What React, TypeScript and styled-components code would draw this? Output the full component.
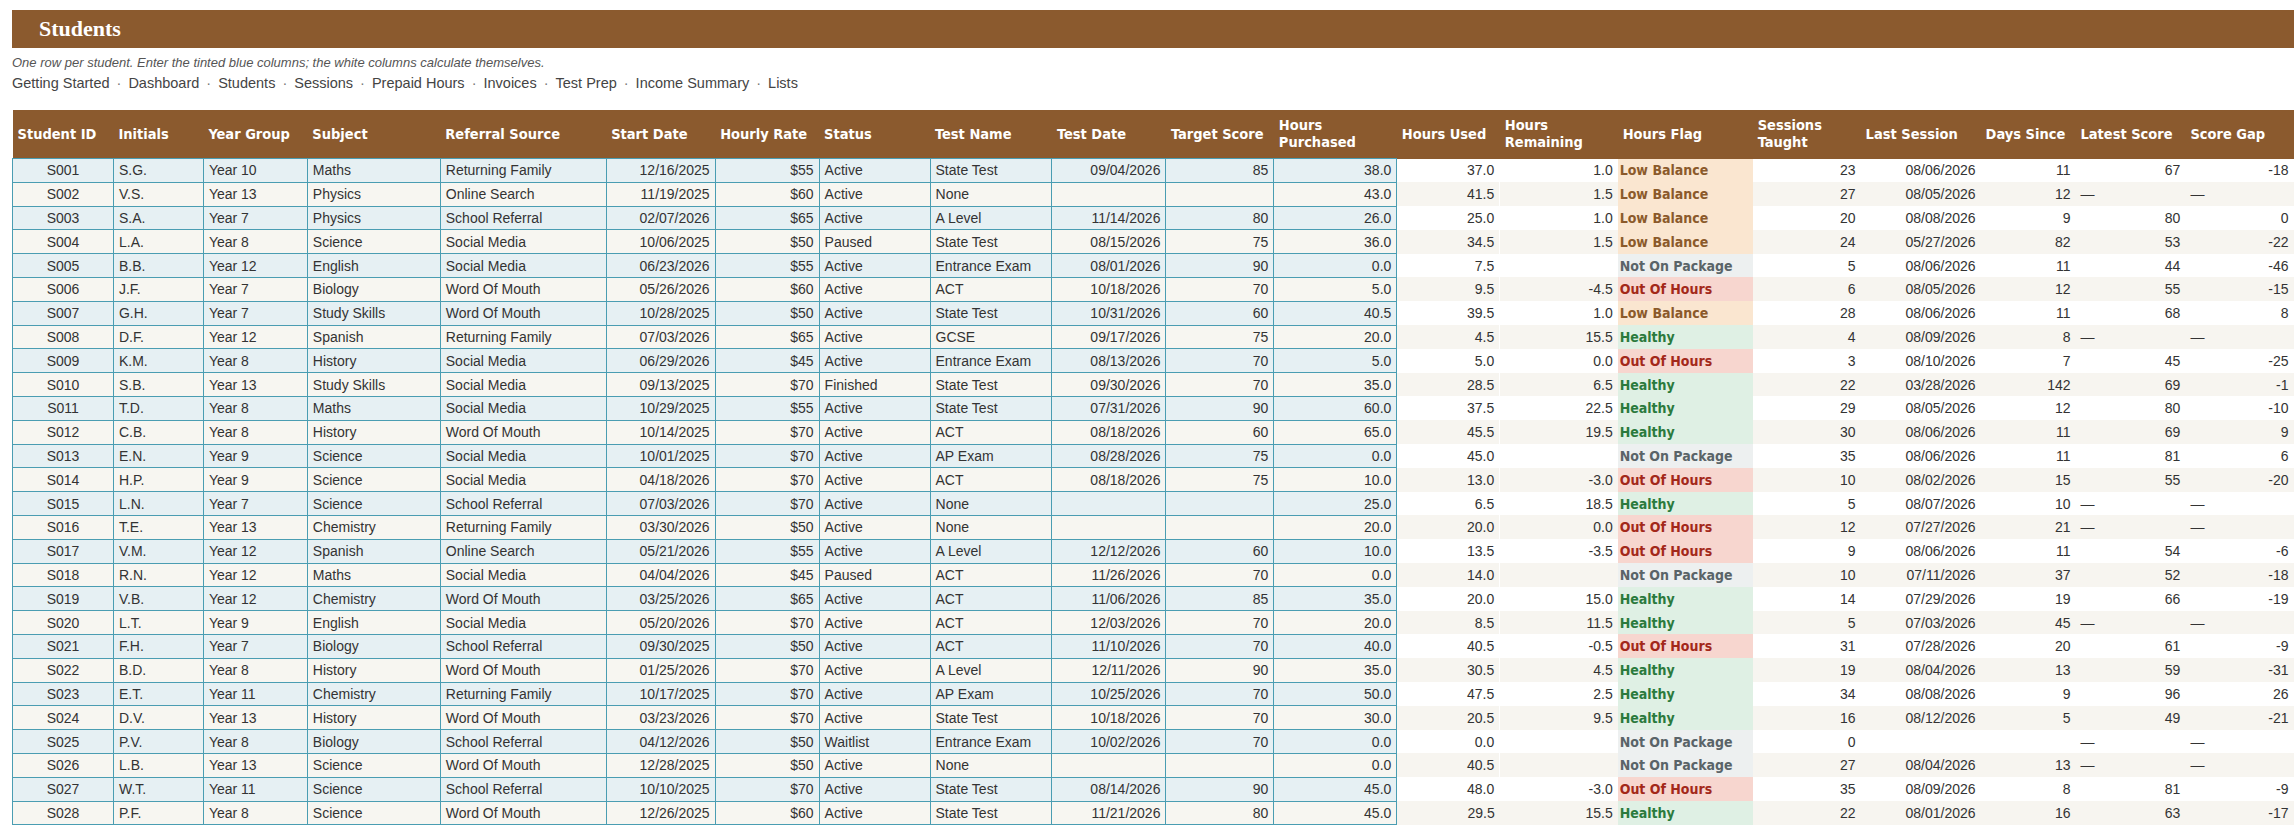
import * as React from 'react'
import styled, {createGlobalStyle} from 'styled-components'

const Global = createGlobalStyle`
  body { margin: 0; background: #fff; font-family: "Liberation Sans", Arial, sans-serif; }
`

type Flag = 'low' | 'none' | 'out' | 'ok' | ''

const widths = [101, 90, 104, 133, 166, 109, 104, 111, 122, 114, 108, 123, 103, 118, 135, 108, 120, 95, 110, 108]

const headers = [
  'Student ID', 'Initials', 'Year Group', 'Subject', 'Referral Source', 'Start Date', 'Hourly Rate', 'Status',
  'Test Name', 'Test Date', 'Target Score', 'Hours Purchased', 'Hours Used', 'Hours Remaining', 'Hours Flag',
  'Sessions Taught', 'Last Session', 'Days Since', 'Latest Score', 'Score Gap',
]

const navItems = [
  'Getting Started', 'Dashboard', 'Students', 'Sessions', 'Prepaid Hours', 'Invoices', 'Test Prep',
  'Income Summary', 'Lists',
]

const raw = `S001|S.G.|Year 10|Maths|Returning Family|12/16/2025|$55|Active|State Test|09/04/2026|85|38.0|37.0|1.0|low|23|08/06/2026|11|67|-18
S002|V.S.|Year 13|Physics|Online Search|11/19/2025|$60|Active|None|||43.0|41.5|1.5|low|27|08/05/2026|12|—|—
S003|S.A.|Year 7|Physics|School Referral|02/07/2026|$65|Active|A Level|11/14/2026|80|26.0|25.0|1.0|low|20|08/08/2026|9|80|0
S004|L.A.|Year 8|Science|Social Media|10/06/2025|$50|Paused|State Test|08/15/2026|75|36.0|34.5|1.5|low|24|05/27/2026|82|53|-22
S005|B.B.|Year 12|English|Social Media|06/23/2026|$55|Active|Entrance Exam|08/01/2026|90|0.0|7.5||none|5|08/06/2026|11|44|-46
S006|J.F.|Year 7|Biology|Word Of Mouth|05/26/2026|$60|Active|ACT|10/18/2026|70|5.0|9.5|-4.5|out|6|08/05/2026|12|55|-15
S007|G.H.|Year 7|Study Skills|Word Of Mouth|10/28/2025|$50|Active|State Test|10/31/2026|60|40.5|39.5|1.0|low|28|08/06/2026|11|68|8
S008|D.F.|Year 12|Spanish|Returning Family|07/03/2026|$65|Active|GCSE|09/17/2026|75|20.0|4.5|15.5|ok|4|08/09/2026|8|—|—
S009|K.M.|Year 8|History|Social Media|06/29/2026|$45|Active|Entrance Exam|08/13/2026|70|5.0|5.0|0.0|out|3|08/10/2026|7|45|-25
S010|S.B.|Year 13|Study Skills|Social Media|09/13/2025|$70|Finished|State Test|09/30/2026|70|35.0|28.5|6.5|ok|22|03/28/2026|142|69|-1
S011|T.D.|Year 8|Maths|Social Media|10/29/2025|$55|Active|State Test|07/31/2026|90|60.0|37.5|22.5|ok|29|08/05/2026|12|80|-10
S012|C.B.|Year 8|History|Word Of Mouth|10/14/2025|$70|Active|ACT|08/18/2026|60|65.0|45.5|19.5|ok|30|08/06/2026|11|69|9
S013|E.N.|Year 9|Science|Social Media|10/01/2025|$70|Active|AP Exam|08/28/2026|75|0.0|45.0||none|35|08/06/2026|11|81|6
S014|H.P.|Year 9|Science|Social Media|04/18/2026|$70|Active|ACT|08/18/2026|75|10.0|13.0|-3.0|out|10|08/02/2026|15|55|-20
S015|L.N.|Year 7|Science|School Referral|07/03/2026|$70|Active|None|||25.0|6.5|18.5|ok|5|08/07/2026|10|—|—
S016|T.E.|Year 13|Chemistry|Returning Family|03/30/2026|$50|Active|None|||20.0|20.0|0.0|out|12|07/27/2026|21|—|—
S017|V.M.|Year 12|Spanish|Online Search|05/21/2026|$55|Active|A Level|12/12/2026|60|10.0|13.5|-3.5|out|9|08/06/2026|11|54|-6
S018|R.N.|Year 12|Maths|Social Media|04/04/2026|$45|Paused|ACT|11/26/2026|70|0.0|14.0||none|10|07/11/2026|37|52|-18
S019|V.B.|Year 12|Chemistry|Word Of Mouth|03/25/2026|$65|Active|ACT|11/06/2026|85|35.0|20.0|15.0|ok|14|07/29/2026|19|66|-19
S020|L.T.|Year 9|English|Social Media|05/20/2026|$70|Active|ACT|12/03/2026|70|20.0|8.5|11.5|ok|5|07/03/2026|45|—|—
S021|F.H.|Year 7|Biology|School Referral|09/30/2025|$50|Active|ACT|11/10/2026|70|40.0|40.5|-0.5|out|31|07/28/2026|20|61|-9
S022|B.D.|Year 8|History|Word Of Mouth|01/25/2026|$70|Active|A Level|12/11/2026|90|35.0|30.5|4.5|ok|19|08/04/2026|13|59|-31
S023|E.T.|Year 11|Chemistry|Returning Family|10/17/2025|$70|Active|AP Exam|10/25/2026|70|50.0|47.5|2.5|ok|34|08/08/2026|9|96|26
S024|D.V.|Year 13|History|Word Of Mouth|03/23/2026|$70|Active|State Test|10/18/2026|70|30.0|20.5|9.5|ok|16|08/12/2026|5|49|-21
S025|P.V.|Year 8|Biology|School Referral|04/12/2026|$50|Waitlist|Entrance Exam|10/02/2026|70|0.0|0.0||none|0|||—|—
S026|L.B.|Year 13|Science|Word Of Mouth|12/28/2025|$50|Active|None|||0.0|40.5||none|27|08/04/2026|13|—|—
S027|W.T.|Year 11|Science|School Referral|10/10/2025|$70|Active|State Test|08/14/2026|90|45.0|48.0|-3.0|out|35|08/09/2026|8|81|-9
S028|P.F.|Year 8|Science|Word Of Mouth|12/26/2025|$60|Active|State Test|11/21/2026|80|45.0|29.5|15.5|ok|22|08/01/2026|16|63|-17`

const rows = raw.split('\n').map(l => l.split('|'))

// alignment per column: l = left, r = right, c = center
const align = ['c', 'l', 'l', 'l', 'l', 'r', 'r', 'l', 'l', 'r', 'r', 'r', 'r', 'r', 'l', 'r', 'r', 'r', 'r', 'r']

const flagText: Record<string, string> = {
  low: 'Low Balance', none: 'Not On Package', out: 'Out Of Hours', ok: 'Healthy',
}
const flagColors: Record<string, [string, string]> = {
  low: ['#fae6d0', '#8b5a2b'],
  none: ['#edf0f0', '#5a6468'],
  out: ['#f7d6cf', '#a3281a'],
  ok: ['#dff0e4', '#2b7a3d'],
}

const Page = styled.div`
  padding: 10px 0 0 12px;
`

const TitleBar = styled.div`
  background: #8b5a2e;
  height: 38px;
  display: flex;
  align-items: center;
  padding-left: 27px;
  color: #fff;
  font-family: "Liberation Serif", "Times New Roman", serif;
  font-weight: bold;
  font-size: 22px;
`

const Note = styled.div`
  margin-top: 7px;
  font-size: 13px;
  font-style: italic;
  color: #555;
`

const Nav = styled.div`
  margin-top: 5px;
  font-size: 14.5px;
  color: #444;
`

const Sep = styled.span`
  margin: 0 7px;
  color: #777;
`

const Table = styled.table`
  margin-top: 19px;
  border-collapse: collapse;
  table-layout: fixed;
  font-size: 14px;
  color: #333;
`

const Th = styled.th`
  background: #8b5a2e;
  color: #fff;
  height: 48px;
  padding: 0 5px;
  text-align: left;
  font-family: "DejaVu Sans Condensed", "DejaVu Sans", sans-serif;
  font-weight: bold;
  font-size: 14.5px;
  line-height: 17px;
`

const Td = styled.td<{$input: boolean; $even: boolean; $align: string; $flag?: string}>`
  height: 22.8px;
  padding: 0 5px;
  white-space: nowrap;
  overflow: hidden;
  text-align: ${p => (p.$align === 'c' ? 'center' : p.$align === 'r' ? 'right' : 'left')};
  border: ${p => (p.$input ? '1px solid #4a9db2' : 'none')};
  background: ${p =>
    p.$flag ? flagColors[p.$flag][0] : p.$input ? (p.$even ? '#f7f6f1' : '#e6f0f3') : p.$even ? '#f7f5f0' : '#fff'};
  ${p =>
    p.$flag
      ? `color: ${flagColors[p.$flag][1]}; font-family: "DejaVu Sans Condensed", "DejaVu Sans", sans-serif; font-weight: bold; font-size: 14px; padding-left: 2px;`
      : ''}
`

const Dash = styled.span`
  float: left;
`

export default function App() {
  return (
    <Page>
      <Global />
      <TitleBar>Students</TitleBar>
      <Note>One row per student. Enter the tinted blue columns; the white columns calculate themselves.</Note>
      <Nav>
        {navItems.map((n, i) => (
          <React.Fragment key={n}>
            {i > 0 && <Sep>·</Sep>}
            {n}
          </React.Fragment>
        ))}
      </Nav>
      <Table>
        <colgroup>
          {widths.map((w, i) => (
            <col key={i} style={{width: w}} />
          ))}
        </colgroup>
        <thead>
          <tr>
            {headers.map(h => (
              <Th key={h}>{h}</Th>
            ))}
          </tr>
        </thead>
        <tbody>
          {rows.map((r, ri) => (
            <tr key={r[0]}>
              {r.map((v, ci) => {
                const isFlag = ci === 14
                return (
                  <Td
                    key={ci}
                    $input={ci < 12}
                    $even={ri % 2 === 1}
                    $align={align[ci]}
                    $flag={isFlag && v ? (v as Flag) : undefined}
                  >
                    {isFlag ? flagText[v] || '' : v === '—' ? <Dash>{v}</Dash> : v}
                  </Td>
                )
              })}
            </tr>
          ))}
        </tbody>
      </Table>
    </Page>
  )
}
